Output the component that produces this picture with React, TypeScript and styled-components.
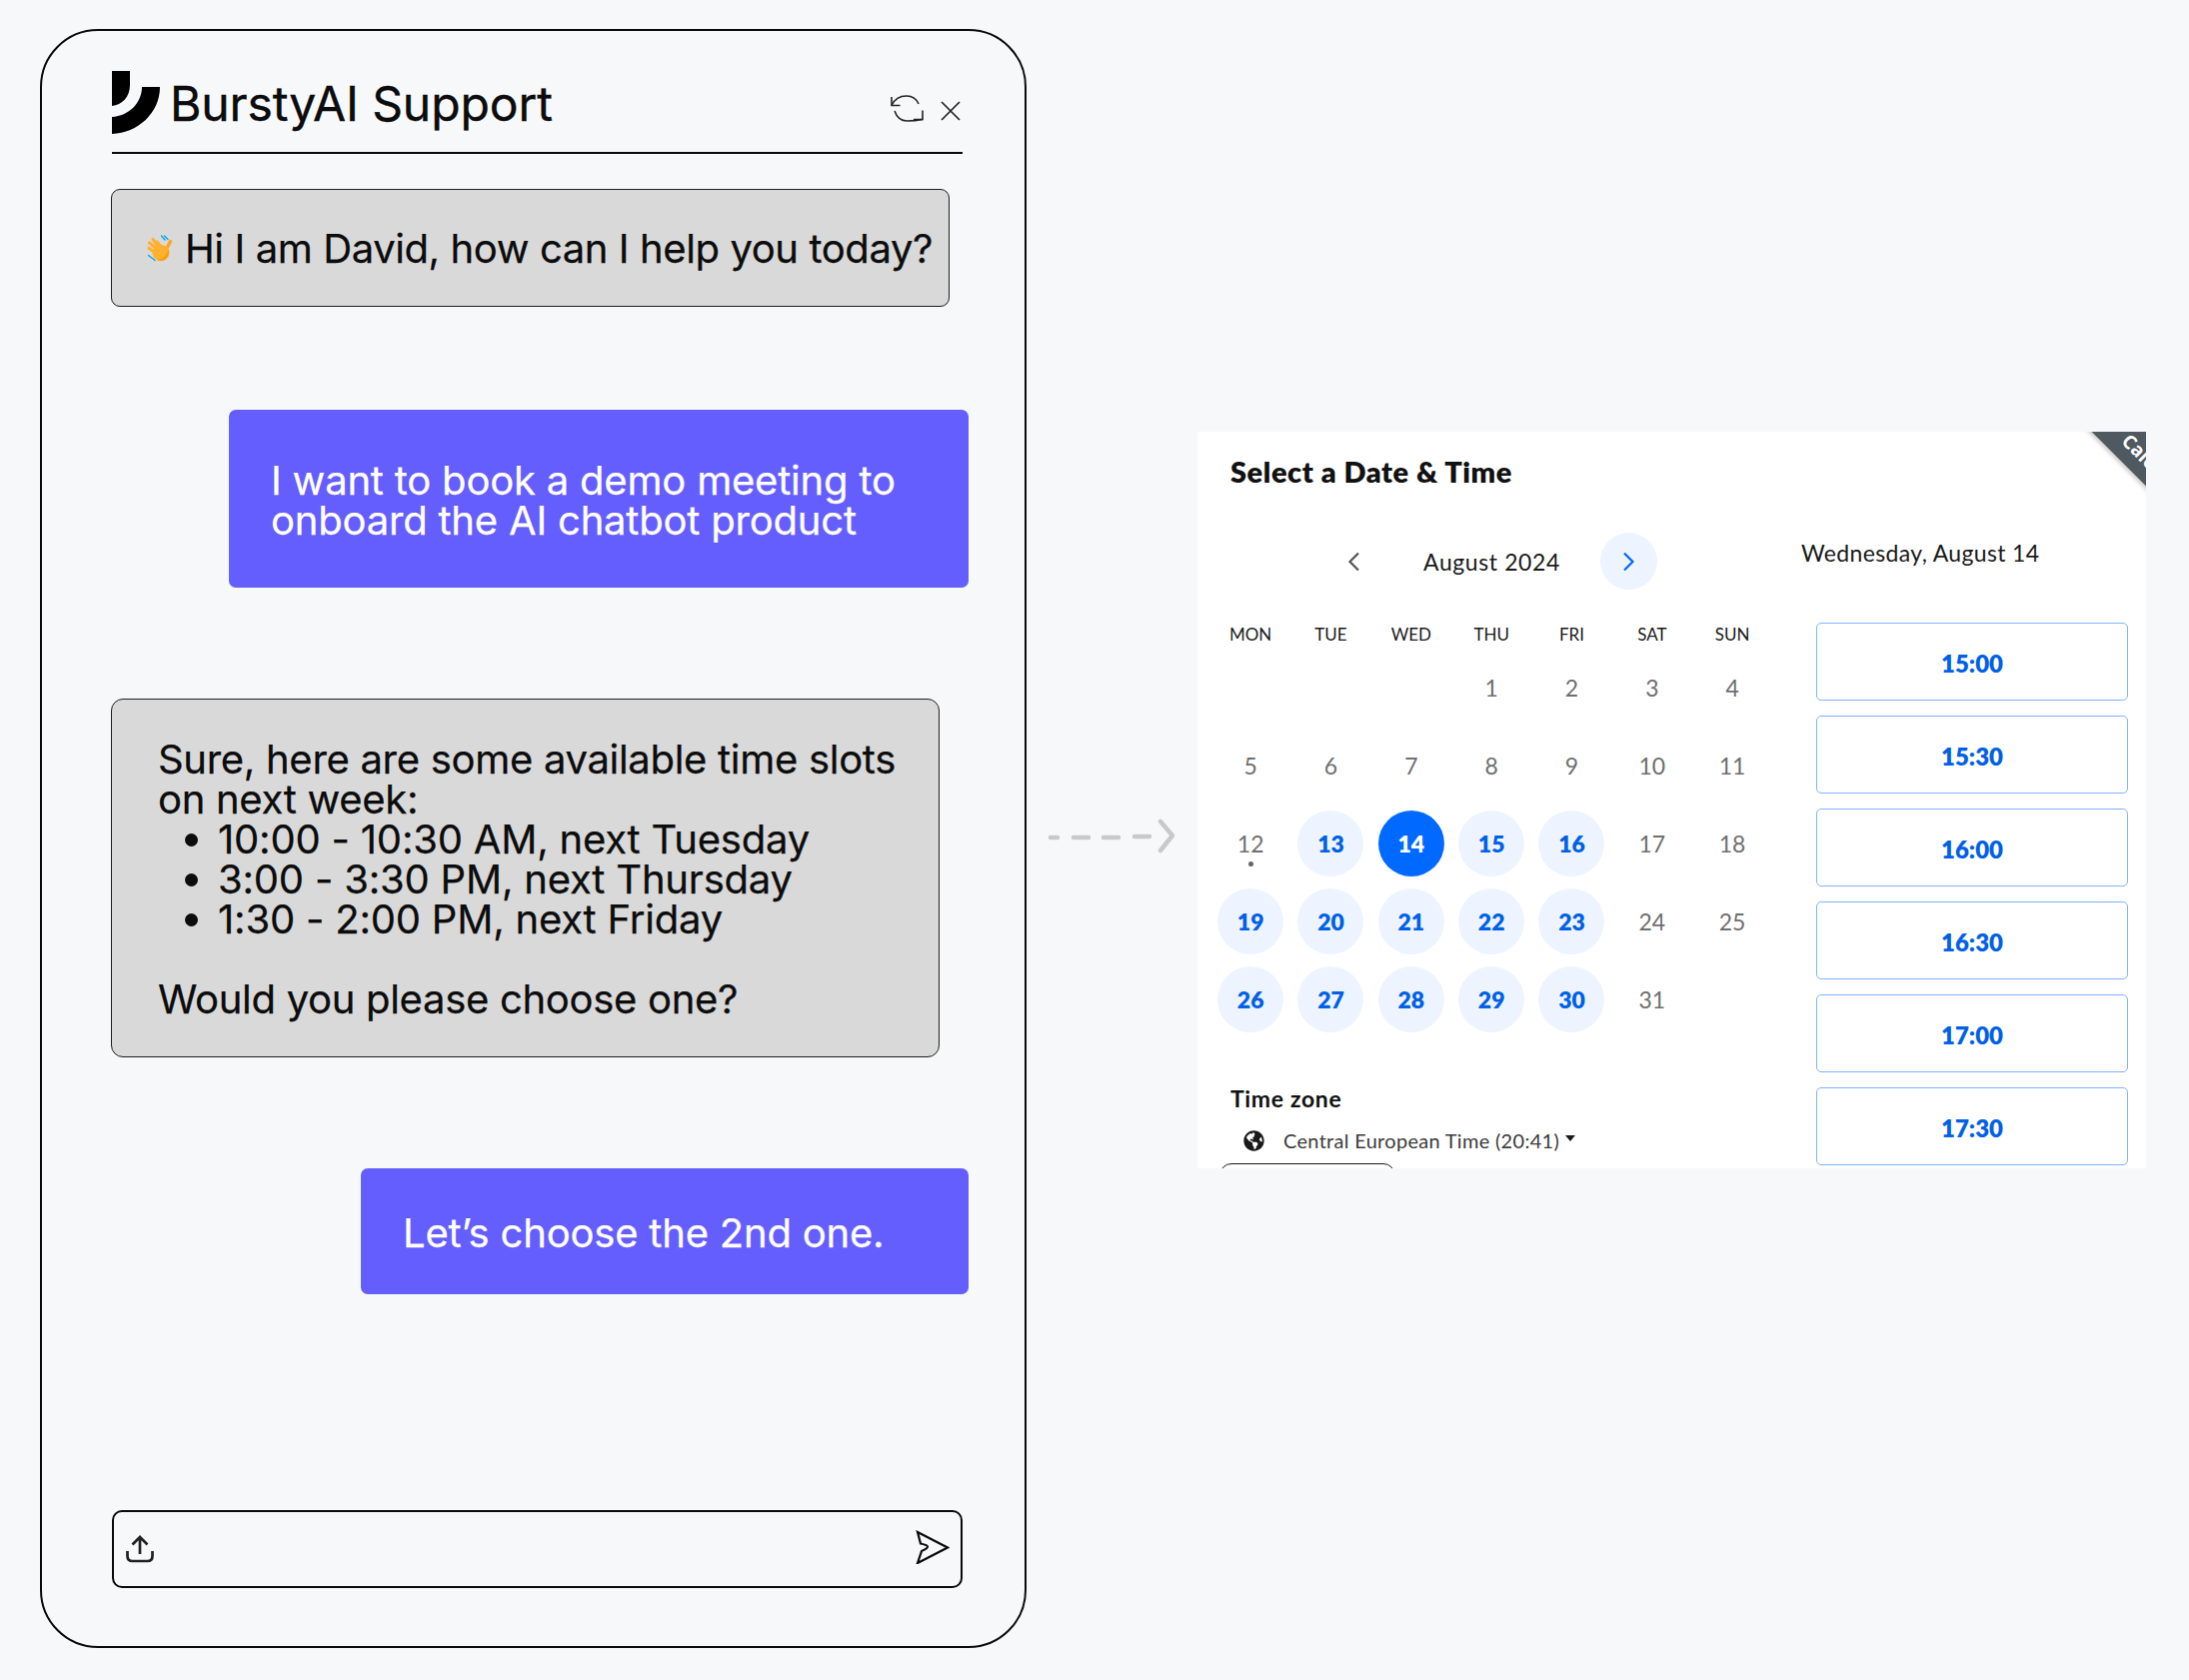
import React from "react";
import styled, { createGlobalStyle } from "styled-components";
import { FaGlobeAmericas } from "react-icons/fa";

const Global = createGlobalStyle`
  html, body { margin: 0; padding: 0; background: #f6f8fa; }
  * { box-sizing: border-box; }
`;

const Page = styled.div`
  display: flex;
  align-items: flex-start;
  width: 2190px;
  height: 1681px;
  padding: 29px 0 0 40px;
  overflow: hidden;
  font-family: Inter, "Liberation Sans", sans-serif;
  color: #0c0c0c;
`;

const Phone = styled.section`
  display: flex;
  flex-direction: column;
  flex: none;
  width: 987px;
  height: 1620px;
  padding: 40px 56px 0 69px;
  border: 2px solid #0a0a0a;
  border-radius: 58px;
`;

const Header = styled.header`
  display: flex;
  align-items: flex-start;
  width: 851px;
  height: 83px;
  margin-left: 1px;
  border-bottom: 2px solid #0a0a0a;
`;

const Logo = styled.svg`
  flex: none;
  width: 48px;
  height: 63px;
`;

const Title = styled.h1`
  flex: 1;
  margin: 4px 0 0 10px;
  font-size: 48px;
  line-height: 58px;
  font-weight: 400;
  letter-spacing: -0.1px;
  -webkit-text-stroke: 0.4px #0c0c0c;
`;

const HeaderIcons = styled.div`
  display: flex;
  align-items: flex-start;
  gap: 17px;
  margin: 24px 2px 0 0;
`;

const IconGlyph = styled.svg`
  display: block;
  flex: none;
  margin-top: ${(p) => p.$top ?? 0}px;
`;

const Bubble = styled.div`
  flex: none;
  width: ${(p) => p.$width}px;
  height: ${(p) => p.$height}px;
  margin-top: ${(p) => p.$top}px;
  font-size: 40px;
  line-height: 40px;
  -webkit-text-stroke: 0.25px currentColor;
`;

const BotBubble = styled(Bubble)`
  padding-left: 46px;
  padding-top: 40px;
  background: #d9d9d9;
  border: 1px solid #1e1e1e;
  border-radius: 12px;
  letter-spacing: -0.3px;
`;

const Greeting = styled(BotBubble)`
  display: flex;
  align-items: center;
  gap: 12px;
  padding: 1px 0 0 34px;
  border-radius: 9px;
  white-space: nowrap;
  letter-spacing: -0.4px;
`;

const UserBubble = styled(Bubble)`
  align-self: flex-end;
  padding: ${(p) => p.$pad}px 20px 0 42px;
  background: #655eff;
  color: #fff;
  border-radius: 7px;
  letter-spacing: -0.2px;
`;

const SlotList = styled.ul`
  margin: 0;
  padding: 0 0 0 60px;
  list-style: disc;
  letter-spacing: -0.2px;
`;

const Composer = styled.div`
  display: flex;
  align-items: center;
  justify-content: space-between;
  width: 851px;
  height: 78px;
  margin-top: 216px;
  margin-left: 1px;
  padding: 0 11px 0 11px;
  border: 2.5px solid #0a0a0a;
  border-radius: 10px;
`;

const ArrowMark = styled.svg`
  flex: none;
  width: 134px;
  height: 40px;
  margin: 787px 0 0 18px;
`;

const Calendar = styled.section`
  position: relative;
  display: grid;
  grid-template-columns: 604px 1fr;
  flex: none;
  width: 949px;
  height: 737px;
  margin: 403px 0 0 19px;
  overflow: hidden;
  background: #fff;
  font-family: Lato, "Open Sans", sans-serif;
  color: #1a1a1a;
`;

const Ribbon = styled.div`
  position: absolute;
  left: 871px;
  top: 28px;
  width: 200px;
  height: 40px;
  padding-left: 40px;
  transform: rotate(45deg);
  background: #505860;
  box-shadow: 0 2px 5px rgba(0, 0, 0, 0.25);
  color: #fff;
  font: 700 19px/40px "Open Sans", sans-serif;
`;

const LeftColumn = styled.div`
  padding: 20px 0 0 13px;
`;

const PanelTitle = styled.h2`
  margin: 0 0 0 20px;
  font-size: 29px;
  line-height: 40px;
  font-weight: 800;
  letter-spacing: 0.55px;
  color: #111;
`;

const MonthNav = styled.div`
  display: flex;
  align-items: center;
  height: 57px;
  margin-top: 41px;
  padding-left: 137px;
`;

const PrevChevron = styled.svg`
  flex: none;
  width: 13px;
  height: 20px;
`;

const MonthLabel = styled.span`
  width: 177px;
  margin-left: 63px;
  font-size: 23px;
  line-height: 28px;
  letter-spacing: 0.6px;
`;

const NextButton = styled.span`
  display: flex;
  flex: none;
  align-items: center;
  justify-content: center;
  width: 57px;
  height: 57px;
  border-radius: 50%;
  background: #edf4ff;
`;

const Weekdays = styled.div`
  display: grid;
  grid-template-columns: repeat(7, 80.33px);
  width: 563px;
  margin-top: 33px;
  font-size: 17px;
  line-height: 24px;
  text-align: center;
`;

const Days = styled.div`
  display: grid;
  grid-template-columns: repeat(7, 80.33px);
  grid-auto-rows: 78px;
  width: 563px;
  margin-top: 2px;
`;

const DayCell = styled.div`
  position: relative;
  display: flex;
  align-items: center;
  justify-content: center;
  grid-column: ${(p) => p.$col ?? "auto"};
`;

const DayNumber = styled.span`
  display: flex;
  align-items: center;
  justify-content: center;
  width: 66px;
  height: 66px;
  border-radius: 50%;
  font-size: 23px;
  font-weight: ${(p) => (p.$state === "off" ? 400 : 800)};
  color: ${(p) => (p.$state === "off" ? "#6f6f6f" : p.$state === "selected" ? "#fff" : "#0060e6")};
  background: ${(p) => (p.$state === "off" ? "transparent" : p.$state === "selected" ? "#0069ff" : "#edf4ff")};
`;

const TodayDot = styled.i`
  position: absolute;
  left: 50%;
  top: 57px;
  width: 5px;
  height: 5px;
  margin-left: -2.5px;
  border-radius: 50%;
  background: #666;
`;

const ZoneLabel = styled.div`
  margin: 46px 0 0 20px;
  font-size: 23px;
  line-height: 28px;
  font-weight: 700;
  letter-spacing: 0.65px;
  color: #111;
`;

const ZoneRow = styled.div`
  display: flex;
  align-items: center;
  height: 28px;
  margin: 14px 0 0 33px;
  font-size: 20px;
  letter-spacing: 0.3px;
  color: #3c3c3c;
`;

const ZoneText = styled.span`
  margin-left: 19px;
`;

const Caret = styled.i`
  width: 0;
  height: 0;
  margin: -4px 0 0 6px;
  border-left: 5px solid transparent;
  border-right: 5px solid transparent;
  border-top: 6px solid #1a1a1a;
`;

const CutButton = styled.div`
  width: 176px;
  height: 40px;
  margin: 9px 0 0 9px;
  border: 1.5px solid #1a1a1a;
  border-radius: 12px;
`;

const RightColumn = styled.div`
  padding-top: 107px;
`;

const DateHeading = styled.div`
  font-size: 23px;
  line-height: 28px;
  height: 28px;
  letter-spacing: 0.35px;
`;

const Slots = styled.div`
  display: flex;
  flex-direction: column;
  gap: 15px;
  width: 312px;
  margin: 56px 0 0 15px;
`;

const Slot = styled.div`
  display: flex;
  align-items: center;
  justify-content: center;
  height: 78px;
  padding-top: 2px;
  border: 1.5px solid #7fb2ff;
  border-radius: 5px;
  font-size: 24px;
  font-weight: 800;
  color: #0060e6;
`;

const days: { n: number; state: "off" | "on" | "selected"; dot?: boolean }[] = [
  ...[1, 2, 3, 4, 5, 6, 7, 8, 9, 10, 11].map((n) => ({ n, state: "off" as const })),
  { n: 12, state: "off", dot: true },
  { n: 13, state: "on" },
  { n: 14, state: "selected" },
  ...[15, 16].map((n) => ({ n, state: "on" as const })),
  ...[17, 18].map((n) => ({ n, state: "off" as const })),
  ...[19, 20, 21, 22, 23].map((n) => ({ n, state: "on" as const })),
  ...[24, 25].map((n) => ({ n, state: "off" as const })),
  ...[26, 27, 28, 29, 30].map((n) => ({ n, state: "on" as const })),
  { n: 31, state: "off" },
];

const WaveHand = () => (
  <svg width="27" height="27" viewBox="0 0 27 27" style={{ flex: "none" }}>
    <g fill="none" strokeLinecap="round">
      <g stroke="#ffb02e" strokeWidth="3.2">
        <path d="M14 14 L7 4.5" />
        <path d="M12 15 L3.5 8" />
        <path d="M10 18 L3 13.5" />
        <path d="M16 13 L11 7" />
      </g>
      <path d="M19 17 L24.5 6.5" stroke="#ffa51f" strokeWidth="3.4" />
      <g stroke="#00a6ed" strokeWidth="1.3">
        <path d="M15.5 1 L19 5" />
        <path d="M18.5 1 L22 4.5" />
        <path d="M2.5 20.5 L9 25.5" />
      </g>
    </g>
    <ellipse cx="15" cy="18" rx="8.5" ry="8" fill="#ffb02e" />
    <path d="M22.5 14 C24 19 21 26 15 26 C13 26 12 25.5 11 25 C16 25 21 21 22.5 14Z" fill="#f59f10" />
  </svg>
);

export default function App() {
  return (
    <Page>
      <Global />
      <Phone>
        <Header>
          <Logo viewBox="0 0 48 63">
            <path d="M0 0H18V14C18 26 10 34 0 35Z" fill="#000" />
            <path d="M30 16H48C48 42 26 62 0 63V46C17 45 30 32 30 16Z" fill="#000" />
          </Logo>
          <Title>BurstyAI Support</Title>
          <HeaderIcons>
            <IconGlyph width="33" height="27" viewBox="0 0 33 27" fill="none" stroke="#222" strokeWidth="1.6">
              <path d="M1 2 V10.5 H9.5" />
              <path d="M1 10.5 C4 4 10 1 16 1 C22 1 26 4 28 9" />
              <path d="M32 15.5 V24.5 H23" />
              <path d="M32 24.5 C27 25.5 22 26 16.5 26 C10 26 6 22 4 16" />
            </IconGlyph>
            <IconGlyph $top={6} width="20" height="20" viewBox="0 0 20 20" fill="none" stroke="#222" strokeWidth="1.7">
              <path d="M1 1 L19 19 M19 1 L1 19" />
            </IconGlyph>
          </HeaderIcons>
        </Header>

        <Greeting $width={839} $height={118} $top={35}>
          <WaveHand />
          <span>Hi I am David, how can I help you today?</span>
        </Greeting>

        <UserBubble $width={740} $height={178} $top={103} $pad={51}>
          I want to book a demo meeting to onboard the AI chatbot product
        </UserBubble>

        <BotBubble $width={829} $height={359} $top={111}>
          Sure, here are some available time slots on next week:
          <SlotList>
            <li>10:00 - 10:30 AM, next Tuesday</li>
            <li>3:00 - 3:30 PM, next Thursday</li>
            <li>1:30 - 2:00 PM, next Friday</li>
          </SlotList>
          <br />
          Would you please choose one?
        </BotBubble>

        <UserBubble $width={608} $height={126} $top={111} $pad={45}>
          Let’s choose the 2nd one.
        </UserBubble>

        <Composer>
          <IconGlyph $top={0} width="30" height="30" viewBox="0 0 30 30" fill="none" stroke="#222" strokeWidth="2.7">
            <path d="M15 20 V3.5 M7.5 10.5 L15 3 L22.5 10.5" />
            <path d="M2.5 17 V22 Q2.5 27 7.5 27 H22.5 Q27.5 27 27.5 22 V17" />
          </IconGlyph>
          <IconGlyph $top={-4} width="34" height="34" viewBox="0 0 34 34" fill="none" stroke="#0a0a0a" strokeWidth="2.2">
            <path d="M2 2 L32 17.5 L2 33 L6 21 Q12 18.5 12 16.5 Q12 15 5 13.5 Z" />
          </IconGlyph>
        </Composer>
      </Phone>

      <ArrowMark viewBox="0 0 134 40" fill="none" stroke="#c9c9c9" strokeWidth="4.5" strokeLinecap="round" strokeLinejoin="round">
        <path d="M6 22 H13" />
        <path d="M29 22 H44" />
        <path d="M59 22 H74" />
        <path d="M90 21 H105" />
        <path d="M116 6 L128 20 L116 35" />
      </ArrowMark>

      <Calendar>
        <Ribbon>Calendly</Ribbon>
        <LeftColumn>
          <PanelTitle>Select a Date &amp; Time</PanelTitle>
          <MonthNav>
            <PrevChevron viewBox="0 0 13 20" fill="none" stroke="#555" strokeWidth="2.2">
              <path d="M11 1.5 L2.5 10 L11 18.5" />
            </PrevChevron>
            <MonthLabel>August 2024</MonthLabel>
            <NextButton>
              <svg width="13" height="20" viewBox="0 0 13 20" fill="none" stroke="#0069ff" strokeWidth="2.2">
                <path d="M2 1.5 L10.5 10 L2 18.5" />
              </svg>
            </NextButton>
          </MonthNav>
          <Weekdays>
            {["MON", "TUE", "WED", "THU", "FRI", "SAT", "SUN"].map((d) => (
              <span key={d}>{d}</span>
            ))}
          </Weekdays>
          <Days>
            {days.map((d) => (
              <DayCell key={d.n} $col={d.n === 1 ? 4 : undefined}>
                <DayNumber $state={d.state}>{d.n}</DayNumber>
                {d.dot && <TodayDot />}
              </DayCell>
            ))}
          </Days>
          <ZoneLabel>Time zone</ZoneLabel>
          <ZoneRow>
            <FaGlobeAmericas size={21} color="#1a1a1a" />
            <ZoneText>Central European Time (20:41)</ZoneText>
            <Caret />
          </ZoneRow>
          <CutButton />
        </LeftColumn>
        <RightColumn>
          <DateHeading>Wednesday, August 14</DateHeading>
          <Slots>
            {["15:00", "15:30", "16:00", "16:30", "17:00", "17:30"].map((t) => (
              <Slot key={t}>{t}</Slot>
            ))}
          </Slots>
        </RightColumn>
      </Calendar>
    </Page>
  );
}
